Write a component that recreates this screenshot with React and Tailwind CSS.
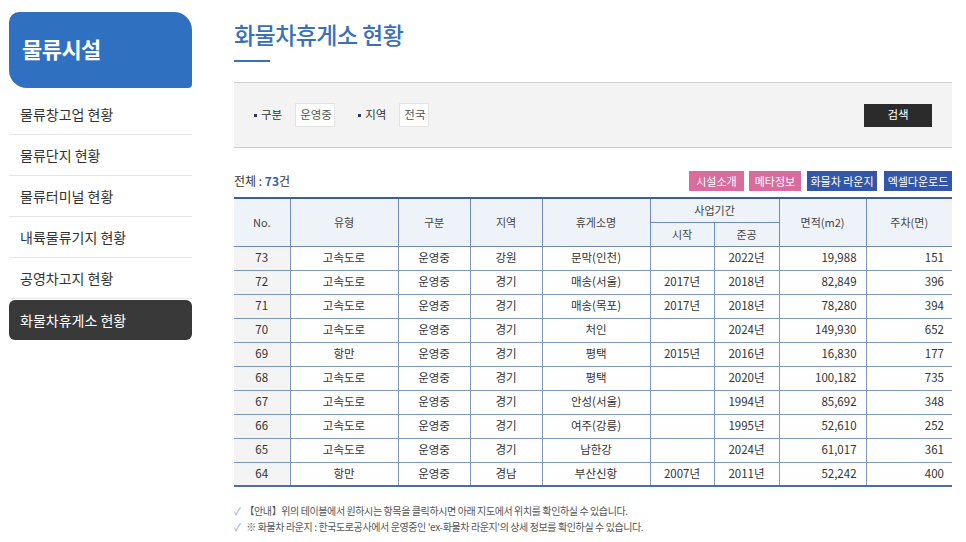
const menu = [
  "물류창고업 현황",
  "물류단지 현황",
  "물류터미널 현황",
  "내륙물류기지 현황",
  "공영차고지 현황",
  "화물차휴게소 현황",
];

const rows = [
  [73, "고속도로", "운영중", "강원", "문막(인천)", "", "2022년", "19,988", "151"],
  [72, "고속도로", "운영중", "경기", "매송(서울)", "2017년", "2018년", "82,849", "396"],
  [71, "고속도로", "운영중", "경기", "매송(목포)", "2017년", "2018년", "78,280", "394"],
  [70, "고속도로", "운영중", "경기", "처인", "", "2024년", "149,930", "652"],
  [69, "항만", "운영중", "경기", "평택", "2015년", "2016년", "16,830", "177"],
  [68, "고속도로", "운영중", "경기", "평택", "", "2020년", "100,182", "735"],
  [67, "고속도로", "운영중", "경기", "안성(서울)", "", "1994년", "85,692", "348"],
  [66, "고속도로", "운영중", "경기", "여주(강릉)", "", "1995년", "52,610", "252"],
  [65, "고속도로", "운영중", "경기", "남한강", "", "2024년", "61,017", "361"],
  [64, "항만", "운영중", "경남", "부산신항", "2007년", "2011년", "52,242", "400"],
];

const th = "border border-[#6f89b5] font-normal text-[11px] text-[#444]";
const td = "border border-[#7f96bd] h-[24px] text-[11.5px] text-[#333]";

export default function App() {
  return (
    <div
      className="w-[966px] h-[542px] bg-white flex overflow-hidden"
      style={{ fontFamily: '"Noto Sans CJK KR", "Noto Sans", sans-serif' }}
    >
      {/* sidebar */}
      <aside className="w-[234px] shrink-0 pt-[12px] pl-[9px]">
        <div className="w-[183px] h-[76px] bg-[#3070c0] rounded-tl-[10px] rounded-tr-[18px] rounded-bl-[18px] rounded-br-[4px] flex items-center pl-[13px] pb-[3px]">
          <span className="text-white text-[22px] font-bold tracking-tight">물류시설</span>
        </div>
        <ul className="w-[183px] mt-[6px]">
          {menu.map((m, i) =>
            i === menu.length - 1 ? (
              <li
                key={m}
                className="h-[40px] mt-[1px] bg-[#393939] rounded-[6px] flex items-center pl-[11px] text-white text-[14px]"
              >
                {m}
              </li>
            ) : (
              <li
                key={m}
                className="h-[41px] border-b border-[#e6e6e6] flex items-center pl-[11px] text-[#333] text-[14px]"
              >
                {m}
              </li>
            )
          )}
        </ul>
      </aside>

      {/* main */}
      <main className="w-[718px] pt-[18px]">
        <h1 className="text-[23px] leading-[32px] font-medium text-[#3a70b8] tracking-tight">
          화물차휴게소 현황
        </h1>
        <div className="w-[36px] h-[2px] bg-[#3a70b8] mt-[10px]" />

        <div className="mt-[20px] h-[66px] bg-[#f3f3f3] border-y border-[#cfcfcf] flex items-center pl-[20px] pr-[20px] text-[11.5px] text-[#333]">
          <span className="w-[3px] h-[3px] bg-[#333366] mr-[4px]" />
          <span>구분</span>
          <span className="ml-[13px] w-[40px] h-[24px] pl-[4px] bg-white border border-[#e3e3e3] flex items-center text-[#555] overflow-hidden whitespace-nowrap">운영중</span>
          <span className="w-[3px] h-[3px] bg-[#333366] ml-[23px] mr-[4px]" />
          <span>지역</span>
          <span className="ml-[13px] w-[30px] h-[24px] pl-[4px] bg-white border border-[#e3e3e3] flex items-center text-[#555] overflow-hidden whitespace-nowrap">전국</span>
          <button className="ml-auto w-[68px] h-[23px] bg-[#2b2b2b] text-white text-[11.5px] flex items-center justify-center">
            검색
          </button>
        </div>

        <div className="mt-[23px] flex items-center justify-between h-[20px]">
          <span className="text-[12px] text-[#333]">
            전체 : <b className="text-[#2f5fb0]">73</b>건
          </span>
          <div className="flex text-[11px] text-white">
            <span className="w-[55px] h-[20px] bg-[#d96c9c] flex items-center justify-center">시설소개</span>
            <span className="ml-[5px] w-[52px] h-[20px] bg-[#d96c9c] flex items-center justify-center">메타정보</span>
            <span className="ml-[6px] w-[70px] h-[20px] bg-[#3356a8] flex items-center justify-center">화물차 라운지</span>
            <span className="ml-[7px] w-[68px] h-[20px] bg-[#3356a8] flex items-center justify-center">엑셀다운로드</span>
          </div>
        </div>

        <table className="mt-[6px] w-[718px] border-collapse table-fixed border-t-2 border-b-2 border-t-[#3d5f99] border-b-[#4d6da3] [&_td:first-child]:border-l-0 [&_th:first-child]:border-l-0 [&_td:last-child]:border-r-0 [&_th:last-child]:border-r-0">
          <colgroup>
            <col className="w-[56px]" />
            <col className="w-[108px]" />
            <col className="w-[72px]" />
            <col className="w-[72px]" />
            <col className="w-[108px]" />
            <col className="w-[64px]" />
            <col className="w-[65px]" />
            <col className="w-[87px]" />
            <col className="w-[86px]" />
          </colgroup>
          <thead className="bg-[#eef3f9]">
            <tr className="h-[24px]">
              <th rowSpan={2} className={th}>No.</th>
              <th rowSpan={2} className={th}>유형</th>
              <th rowSpan={2} className={th}>구분</th>
              <th rowSpan={2} className={th}>지역</th>
              <th rowSpan={2} className={th}>휴게소명</th>
              <th colSpan={2} className={th}>사업기간</th>
              <th rowSpan={2} className={th}>면적(m2)</th>
              <th rowSpan={2} className={th}>주차(면)</th>
            </tr>
            <tr className="h-[24px]">
              <th className={th}>시작</th>
              <th className={th}>준공</th>
            </tr>
          </thead>
          <tbody>
            {rows.map((r) => (
              <tr key={r[0]}>
                <td className={`${td} bg-[#f4f4f4] text-center`}>{r[0]}</td>
                <td className={`${td} text-center`}>{r[1]}</td>
                <td className={`${td} text-center`}>{r[2]}</td>
                <td className={`${td} text-center`}>{r[3]}</td>
                <td className={`${td} text-center`}>{r[4]}</td>
                <td className={`${td} text-center`}>{r[5]}</td>
                <td className={`${td} text-center`}>{r[6]}</td>
                <td className={`${td} text-right pr-[9px]`}>{r[7]}</td>
                <td className={`${td} text-right pr-[8px]`}>{r[8]}</td>
              </tr>
            ))}
          </tbody>
        </table>

        <ul className="mt-[16px] text-[10px] text-[#555] leading-[16px] tracking-[-0.4px]">
          <li className="flex gap-[4px]">
            <span className="text-[#7aa0d0]">✓</span>
            <span>【안내】위의 테이블에서 원하시는 항목을 클릭하시면 아래 지도에서 위치를 확인하실 수 있습니다.</span>
          </li>
          <li className="flex gap-[4px]">
            <span className="text-[#7aa0d0]">✓</span>
            <span>&nbsp;※ 화물차 라운지 : 한국도로공사에서 운영중인 'ex-화물차 라운지'의 상세 정보를 확인하실 수 있습니다.</span>
          </li>
        </ul>
      </main>
    </div>
  );
}
